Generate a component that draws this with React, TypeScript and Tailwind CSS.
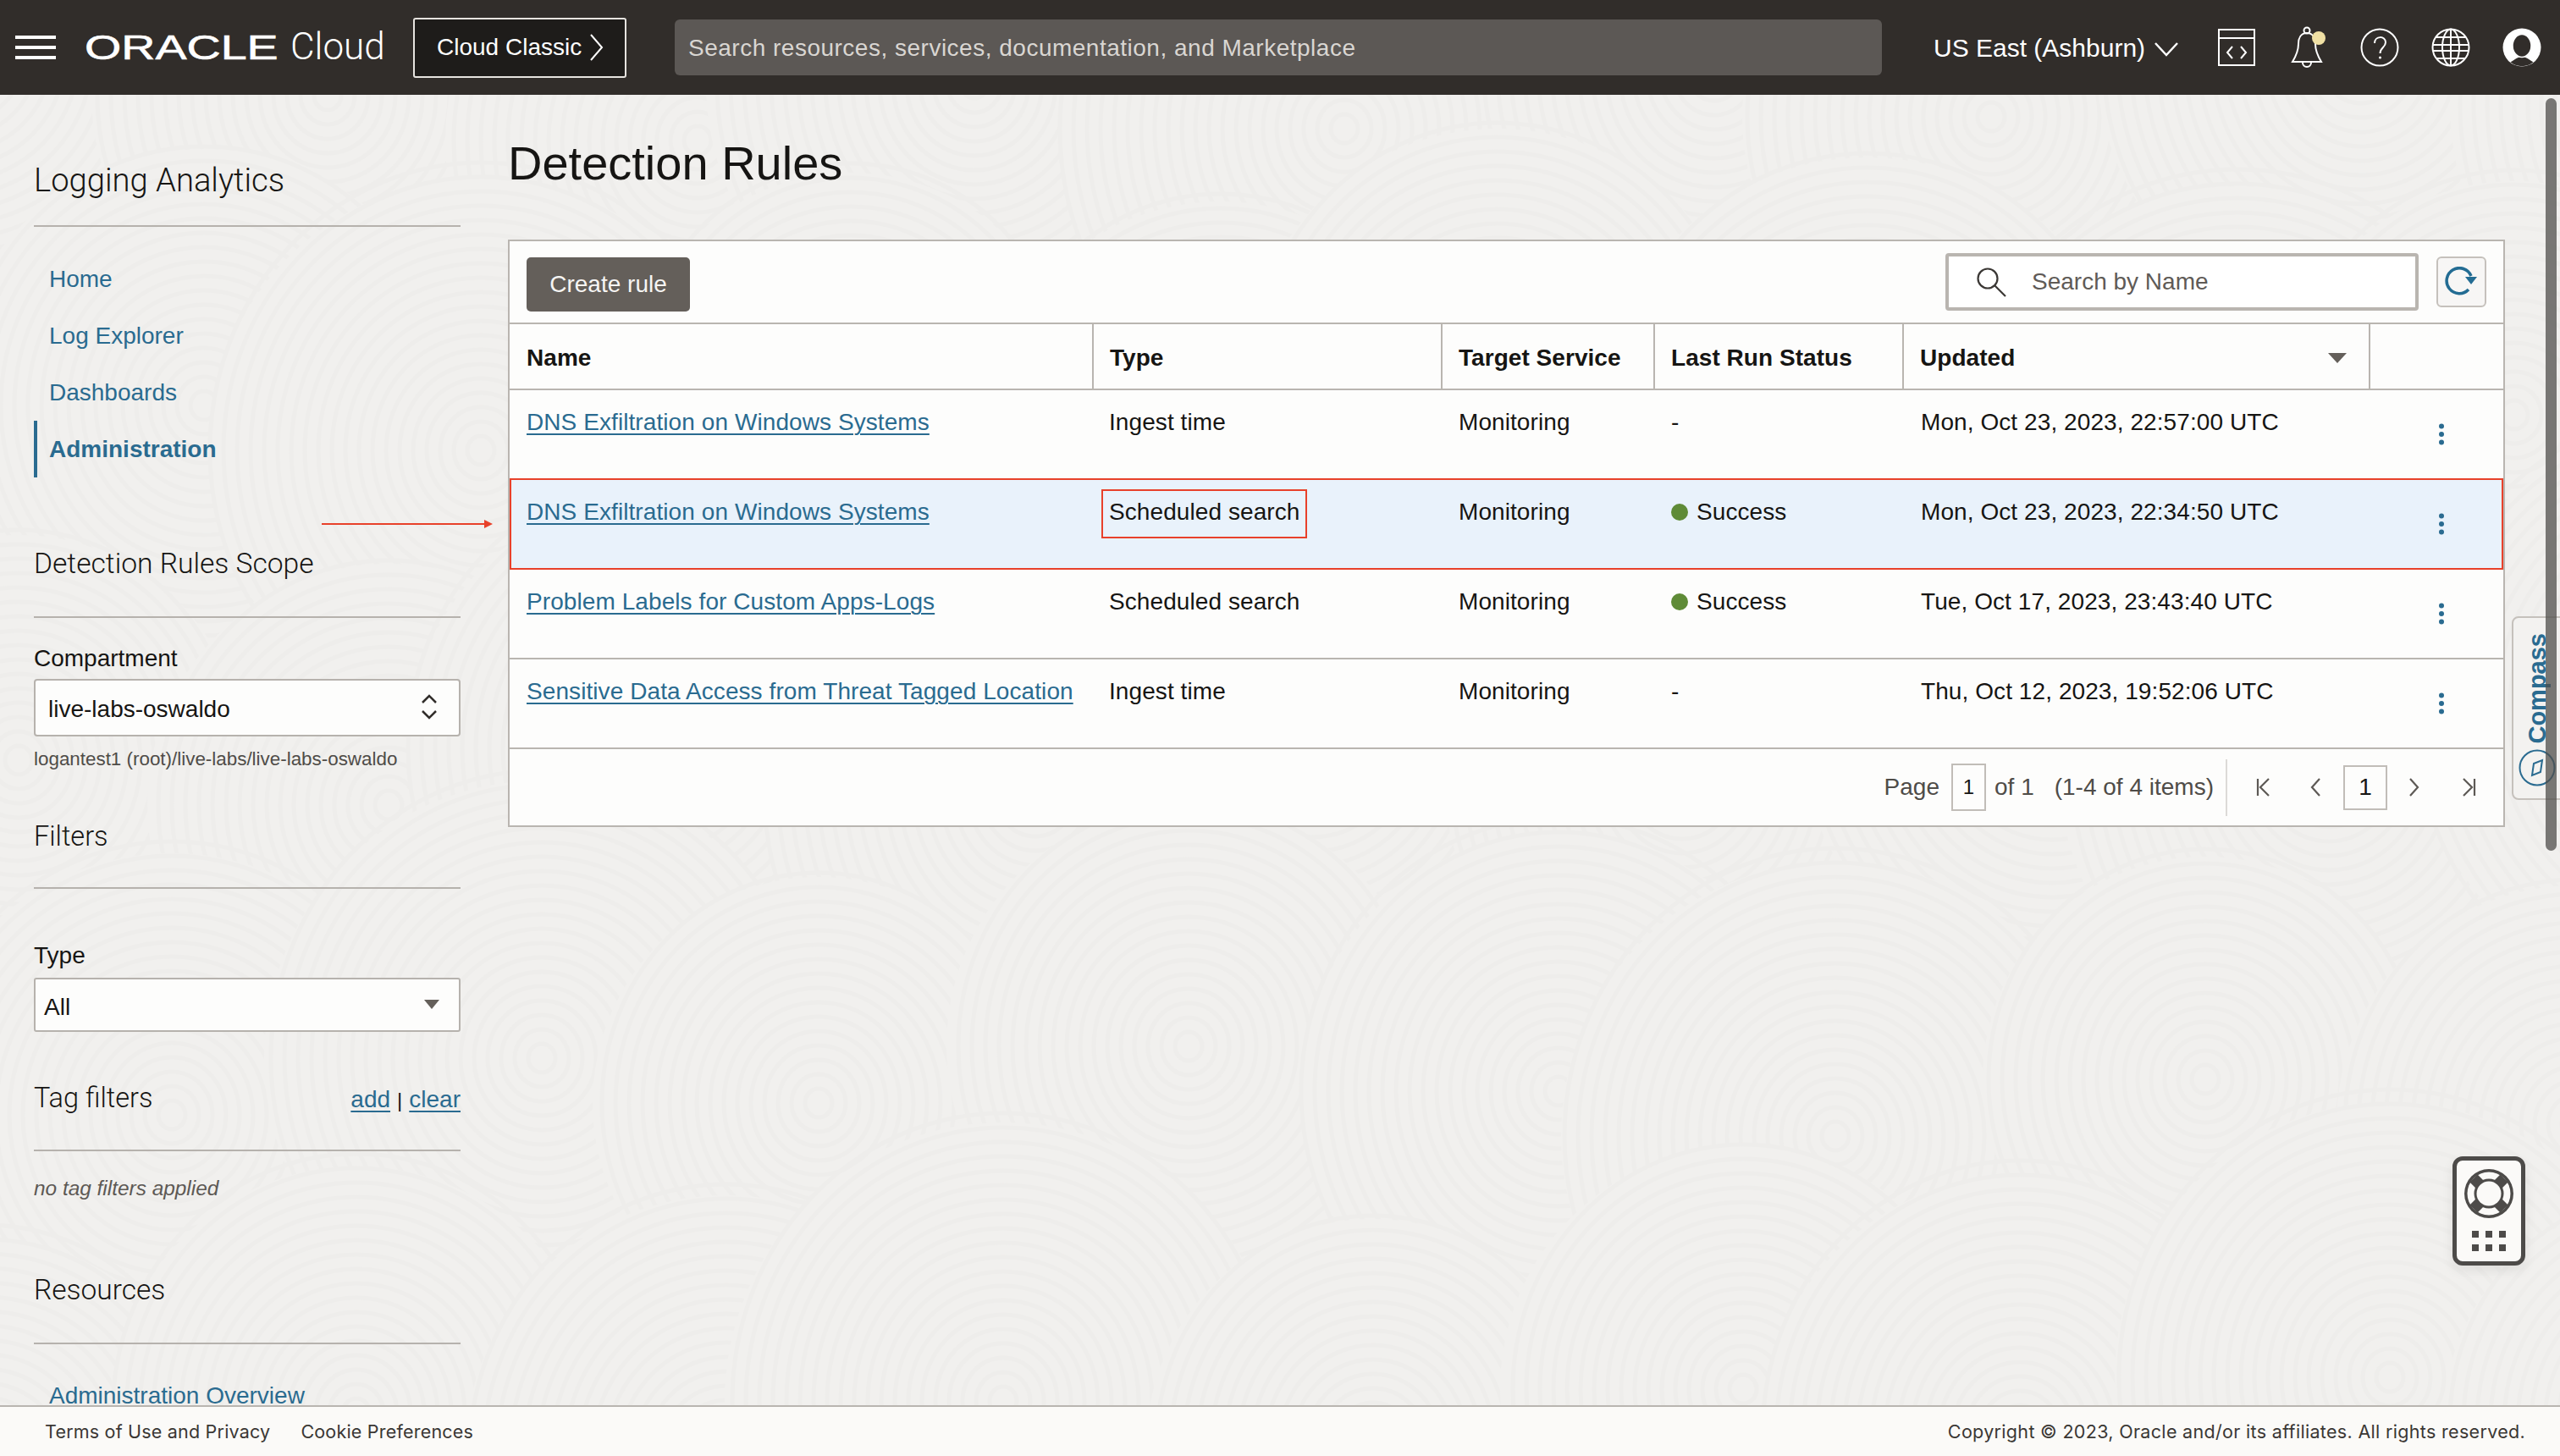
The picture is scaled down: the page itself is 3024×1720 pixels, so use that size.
import React from "react";

const SANS = "font-['Liberation_Sans',Arial,sans-serif]";
const LINK = "text-[#2a6b90]";

function Swirls() {
  const centers: [number, number, number][] = [];
  const cols = 9;
  const rows = 5;
  for (let r = 0; r < rows; r++) {
    for (let c = 0; c < cols; c++) {
      const x = c * 400 + (r % 2) * 200 + ((c * 37 + r * 91) % 110) - 50;
      const y = 120 + r * 390 + ((c * 53 + r * 29) % 120) - 60;
      centers.push([x, y, 260 + ((c * 19 + r * 43) % 80)]);
    }
  }
  return (
    <svg className="absolute inset-0 h-full w-full" viewBox="0 0 3024 1720" fill="none" aria-hidden="true">
      {centers.map(([x, y, R], i) => (
        <g key={i}>
          <circle cx={x} cy={y} r={R} fill="#f1f0ee" />
          {Array.from({ length: Math.floor(R / 16) }).map((_, k) => (
            <ellipse key={k} cx={x} cy={y} rx={(k + 1) * 16} ry={(k + 1) * 17} stroke="#eeedeb" strokeWidth="5" />
          ))}
        </g>
      ))}
    </svg>
  );
}

function Section({ title, outer, size, right }: { title: string; outer: string; size: string; right?: React.ReactNode }) {
  return (
    <div className={`flex items-center justify-between border-b-2 border-[#b6b2ad] ${outer}`}>
      <span className={`-mb-[2px] font-['Roboto',sans-serif] font-light leading-none text-[#161513] ${size}`}>{title}</span>
      {right}
    </div>
  );
}

function NavItem({ label, active }: { label: string; active?: boolean }) {
  return (
    <div className={`flex h-[67px] items-center text-[28px] ${LINK} ${active ? "border-l-4 border-[#2a6b90] pl-[14px] font-bold" : "pl-[18px]"}`}>
      {label}
    </div>
  );
}

function Kebab() {
  return (
    <svg width="8" height="26" viewBox="0 0 8 26" className="text-[#2a6b90]" fill="currentColor" aria-hidden="true">
      <circle cx="4" cy="3.5" r="3" />
      <circle cx="4" cy="13" r="3" />
      <circle cx="4" cy="22.5" r="3" />
    </svg>
  );
}

type Row = { name: string; type: string; status: string; updated: string };
const rows: Row[] = [
  { name: "DNS Exfiltration on Windows Systems", type: "Ingest time", status: "-", updated: "Mon, Oct 23, 2023, 22:57:00 UTC" },
  { name: "DNS Exfiltration on Windows Systems", type: "Scheduled search", status: "Success", updated: "Mon, Oct 23, 2023, 22:34:50 UTC" },
  { name: "Problem Labels for Custom Apps-Logs", type: "Scheduled search", status: "Success", updated: "Tue, Oct 17, 2023, 23:43:40 UTC" },
  { name: "Sensitive Data Access from Threat Tagged Location", type: "Ingest time", status: "-", updated: "Thu, Oct 12, 2023, 19:52:06 UTC" },
];

const GRID = "grid grid-cols-[690px_412px_251px_294px_551px_1fr]";

function TableRow({ row, highlight }: { row: Row; highlight: boolean }) {
  const cell = "pt-[20px] leading-[36px]";
  return (
    <div
      className={`${GRID} relative text-[28px] tracking-[0.08px] text-[#161513] ${
        highlight
          ? "-mt-[2px] h-[108px] bg-[#e9f2fb] shadow-[inset_0_0_0_2px_#e8412a]"
          : "h-[106px] border-b-2 border-[#b9b5b0]"
      }`}
    >
      <div className={`${cell} pl-[20px] ${highlight ? "pt-[22px]" : ""}`}>
        <span className={`underline underline-offset-[4px] decoration-2 ${LINK}`}>{row.name}</span>
      </div>
      <div className={`${cell} pl-[18px] ${highlight ? "pt-[22px]" : ""}`}>
        {highlight ? (
          <span className="relative inline-block">
            {row.type}
            <span className="absolute -left-[9px] -right-[9px] -top-[9px] -bottom-[13px] border-2 border-[#e8412a]" />
          </span>
        ) : (
          row.type
        )}
      </div>
      <div className={`${cell} pl-[19px] ${highlight ? "pt-[22px]" : ""}`}>Monitoring</div>
      <div className={`${cell} flex items-start gap-[10px] pl-[19px] ${highlight ? "pt-[22px]" : ""}`}>
        {row.status === "Success" && <span className="mt-[8px] h-[20px] w-[20px] rounded-full bg-[#5f8b37]" />}
        <span>{row.status}</span>
      </div>
      <div className={`${cell} pl-[20px] ${highlight ? "pt-[22px]" : ""}`}>{row.updated}</div>
      <div className={`flex items-start pl-[80px] ${highlight ? "pt-[41px]" : "pt-[39px]"}`}>
        <Kebab />
      </div>
    </div>
  );
}

function HeaderIcons() {
  return (
    <div className="ml-[45px] flex items-center gap-[40px] text-white">
      <svg width="46" height="46" viewBox="0 0 46 46" fill="none" stroke="currentColor" strokeWidth="2" aria-hidden="true">
        <rect x="2" y="2" width="42" height="42" />
        <path d="M2 12h42" />
        <path d="M18 22l-6 7 6 7M28 22l6 7-6 7" />
      </svg>
      <svg width="48" height="50" viewBox="0 0 48 50" fill="none" stroke="currentColor" strokeWidth="2" aria-hidden="true" className="-ml-[1px]">
        <circle cx="21" cy="5" r="3.5" />
        <path d="M21 8c-7 0-10 6-10 13 0 9-4 16-7 21h34c-3-5-7-12-7-21 0-7-3-13-10-13z" />
        <path d="M16 43a5 5 0 0 0 10 0" />
        <ellipse cx="35" cy="14" rx="8" ry="8" fill="#f0e0a4" stroke="none" />
      </svg>
      <svg width="46" height="46" viewBox="0 0 46 46" fill="none" stroke="currentColor" strokeWidth="2" aria-hidden="true" className="-ml-[4px]">
        <circle cx="23" cy="23" r="21.5" />
        <path d="M17 18c0-9 13-9 13-1 0 6-6.500 6-6.500 13" />
        <circle cx="23.500" cy="35" r="1.500" fill="currentColor" stroke="none" />
      </svg>
      <svg width="46" height="46" viewBox="0 0 46 46" fill="none" stroke="currentColor" strokeWidth="2" aria-hidden="true" className="-ml-[2px]">
        <circle cx="23" cy="23" r="21.5" />
        <ellipse cx="23" cy="23" rx="10" ry="21.500" />
        <path d="M23 2v42M5 11h36M2 20h42M2 27h42M6 36h34" />
      </svg>
      <svg width="46" height="46" viewBox="0 0 46 46" aria-hidden="true" className="-ml-[2px]">
        <circle cx="23" cy="23" r="22.500" fill="#fff" />
        <path d="M9.500 40.500Q15 36 23 33Q31 36 36.500 40.500A22 22 0 0 1 9.500 40.500z" fill="#312d2a" />
        <ellipse cx="23" cy="21" rx="11" ry="13.500" fill="#312d2a" stroke="#fff" strokeWidth="1.500" />
      </svg>
    </div>
  );
}

function LifeBuoy() {
  return (
    <svg width="60" height="60" viewBox="0 0 60 60" aria-hidden="true">
      <circle cx="30" cy="30" r="29" fill="#4d4b49" />
      <circle cx="30" cy="30" r="25.500" fill="#fbfaf8" />
      <path d="M12 12l36 36M48 12L12 48" stroke="#4d4b49" strokeWidth="13" />
      <circle cx="30" cy="30" r="17.500" fill="#4d4b49" />
      <circle cx="30" cy="30" r="14.500" fill="#fbfaf8" />
    </svg>
  );
}

function PageIcon({ d, className }: { d: string; className?: string }) {
  return (
    <svg width="20" height="24" viewBox="0 0 20 24" fill="none" stroke="#5d5955" strokeWidth="2.200" className={className} aria-hidden="true">
      <path d={d} />
    </svg>
  );
}

export default function App() {
  return (
    <div className={`relative flex h-[1720px] w-[3024px] flex-col overflow-hidden bg-[#f1f0ee] ${SANS}`}>
      <Swirls />

      {/* top bar */}
      <header className="relative flex h-[112px] flex-none items-center bg-[#312d2a] text-white">
        <div className="ml-[18px] flex h-[28px] w-[48px] flex-col justify-between">
          <span className="h-[4px] bg-white" />
          <span className="h-[4px] bg-white" />
          <span className="h-[4px] bg-white" />
        </div>
        <div className="ml-[34px] w-[243px] text-[40px] leading-none [-webkit-text-stroke:0.6px_white]">
          <span className="inline-block origin-left scale-x-[1.39]">ORACLE</span>
        </div>
        <span className="mb-[2px] w-[145px] font-['Roboto',sans-serif] text-[44px] font-light leading-none">Cloud</span>
        <div className="flex h-[71px] w-[252px] items-center rounded-[3px] border-2 border-[#e6e3df] bg-[#1e1c1a] pl-[26px] text-[28px]">
          Cloud Classic
          <svg width="18" height="34" viewBox="0 0 18 34" fill="none" stroke="currentColor" strokeWidth="2" className="ml-[9px]" aria-hidden="true">
            <path d="M2 2l13 15L2 32" />
          </svg>
        </div>
        <div className="ml-[57px] flex h-[66px] w-[1426px] items-center rounded-[6px] bg-[#5c5855] pl-[16px] pt-[2px] text-[28px] tracking-[0.5px] text-[#d9d6d2]">
          Search resources, services, documentation, and Marketplace
        </div>
        <span className="ml-[61px] text-[30px]">US East (Ashburn)</span>
        <svg width="30" height="20" viewBox="0 0 30 20" fill="none" stroke="currentColor" strokeWidth="2.500" className="ml-[10px] mt-[4px]" aria-hidden="true">
          <path d="M2 3l13 14L28 3" />
        </svg>
        <HeaderIcons />
      </header>

      {/* body */}
      <main className="relative flex min-h-0 flex-1 overflow-hidden">
        <aside className="w-[544px] flex-none pl-[40px] text-[#161513]">
          <Section title="Logging Analytics" size="text-[38.2px]" outer="mt-[46px] h-[110px]" />
          <nav className="mt-[28px]">
            <NavItem label="Home" />
            <NavItem label="Log Explorer" />
            <NavItem label="Dashboards" />
            <NavItem label="Administration" active />
          </nav>
          <Section title="Detection Rules Scope" size="text-[33.6px]" outer="mt-[38px] h-[128px]" />
          <div className="mt-[27px] h-[40px] pt-[1px] text-[28px] leading-[40px]">Compartment</div>
          <div className="mt-[5px] flex h-[68px] items-center justify-between rounded-[4px] border-2 border-[#b6b2ad] bg-[#fdfdfc] pl-[15px] pr-[25px] pt-[3px] text-[28px]">
            <span>live-labs-oswaldo</span>
            <svg width="20" height="32" viewBox="0 0 20 32" fill="none" stroke="#312d2a" strokeWidth="2.500" className="-mt-[5px]" aria-hidden="true">
              <path d="M2 11l8-8 8 8M2 21l8 8 8-8" />
            </svg>
          </div>
          <div className="mt-[11px] h-[30px] pt-[1px] text-[22.4px] leading-[30px] text-[#4f4c48]">logantest1 (root)/live-labs/live-labs-oswaldo</div>
          <Section title="Filters" size="text-[32.5px]" outer="mt-[15px] h-[124px]" />
          <div className="mt-[58px] h-[40px] pt-[1px] text-[28px] leading-[40px]">Type</div>
          <div className="mt-[7px] flex h-[64px] items-center justify-between rounded-[3px] border-2 border-[#b6b2ad] bg-[#fdfdfc] pl-[10px] pr-[23px] pt-[5px] text-[28px]">
            <span>All</span>
            <span className="-mt-[6px] h-0 w-0 border-x-[9px] border-t-[11px] border-x-transparent border-t-[#645f5a]" />
          </div>
          <Section
            title="Tag filters"
            size="text-[32.5px]"
            outer="mt-[15px] h-[126px]"
            right={
              <span className="mt-[6px] text-[28px] leading-none">
                <span className={`underline underline-offset-[4px] ${LINK}`}>add</span>
                <span className="mx-[8px] text-[24px]">|</span>
                <span className={`underline underline-offset-[4px] ${LINK}`}>clear</span>
              </span>
            }
          />
          <div className="mt-[29px] h-[30px] text-[24.4px] italic leading-[30px] text-[#5d5955]">no tag filters applied</div>
          <Section title="Resources" size="text-[33.5px]" outer="mt-[41px] h-[128px]" />
          <nav className="mt-[27px]">
            <NavItem label="Administration Overview" />
          </nav>
        </aside>

        <section className="w-[2359px] flex-none pl-[56px] pr-0">
          <h1 className="mt-[40px] flex h-[82px] items-center text-[56px] font-normal leading-none text-[#161513]">Detection Rules</h1>
          <div className="mt-[49px] w-[2359px] border-2 border-[#b9b5b0] bg-[#fdfdfc]">
            {/* toolbar */}
            <div className="flex h-[98px] items-center border-b-2 border-[#b9b5b0] pl-[20px] pr-[20px]">
              <div className="mt-[6px] flex h-[64px] w-[193px] items-center justify-center rounded-[5px] bg-[#645f5a] text-[28px] text-[#f6f5f3]">Create rule</div>
              <div className="ml-auto flex h-[68px] w-[559px] items-center rounded-[4px] border-4 border-[#b9b5b0] bg-white pl-[32px] text-[28px] text-[#5f5b57]">
                <svg width="38" height="36" viewBox="0 0 38 36" fill="none" stroke="#3b3835" strokeWidth="2.200" aria-hidden="true">
                  <circle cx="14" cy="14" r="11.500" />
                  <path d="M22 22l13 13" />
                </svg>
                <span className="ml-[28px]">Search by Name</span>
              </div>
              <div className="ml-[21px] flex h-[60px] w-[59px] items-center justify-center rounded-[6px] border-2 border-[#c5c1bc] bg-[#f7f6f5]">
                <svg width="42" height="36" viewBox="0 0 42 36" fill="none" aria-hidden="true">
                  <path d="M29 27A15 15 0 1 1 32 11" stroke="#236c93" strokeWidth="3.500" />
                  <path d="M25 12h14l-7 9z" fill="#236c93" />
                </svg>
              </div>
            </div>
            {/* header */}
            <div className={`${GRID} h-[78px] border-b-2 border-[#b9b5b0] pt-[4px] text-[28px] font-bold tracking-[0.05px] text-[#161513]`}>
              {["Name", "Type", "Target Service", "Last Run Status"].map((h, i) => (
                <div key={h} className={`-mt-[4px] flex items-center border-r-2 border-[#b9b5b0] pt-[4px] ${i === 0 ? "pl-[20px]" : "pl-[19px]"}`}>{h}</div>
              ))}
              <div className="-mt-[4px] flex items-center justify-between border-r-2 border-[#b9b5b0] pl-[19px] pr-[26px] pt-[4px]">
                Updated
                <span className="h-0 w-0 border-x-[11px] border-t-[12px] border-x-transparent border-t-[#645f5a]" />
              </div>
              <div />
            </div>
            {rows.map((r, i) => (
              <TableRow key={i} row={r} highlight={i === 1} />
            ))}
            {/* pagination */}
            <div className="flex h-[90px] items-center justify-end text-[28px] text-[#4f4c48]">
              <span>Page</span>
              <span className="ml-[14px] flex h-[56px] w-[41px] items-center justify-center border-2 border-[#c1bdb8] text-[24px] text-[#161513]">1</span>
              <span className="ml-[10px]">of 1</span>
              <span className="ml-[24px]">(1-4 of 4 items)</span>
              <span className="ml-[14px] h-[67px] w-[2px] bg-[#dcdad7]" />
              <PageIcon className="ml-[33px]" d="M3 2v20M16 2L6 12l10 10" />
              <PageIcon className="ml-[42px]" d="M14 2L5 12l9 10" />
              <span className="ml-[22px] flex h-[53px] w-[52px] items-center justify-center border-2 border-[#c1bdb8] text-[28px] text-[#161513]">1</span>
              <PageIcon className="ml-[21px]" d="M6 2l9 10-9 10" />
              <PageIcon className="ml-[45px]" d="M17 2v20M4 2l10 10L4 22" />
              <span className="w-[31px]" />
            </div>
          </div>
        </section>
      </main>

      {/* footer */}
      <footer className="relative flex h-[60px] flex-none items-center border-t-2 border-[#b9b5b0] bg-[#fbfaf8] pl-[53px] pr-[41px] font-['Inter',sans-serif] text-[21.5px] tracking-[0.2px] text-[#3a3734]">
        <span>Terms of Use and Privacy</span>
        <span className="ml-[36px]">Cookie Preferences</span>
        <span className="ml-auto tracking-[0.32px]">Copyright © 2023, Oracle and/or its affiliates. All rights reserved.</span>
      </footer>

      {/* annotation arrow */}
      <svg width="204" height="14" viewBox="0 0 204 14" className="absolute left-[380px] top-[612px]" aria-hidden="true">
        <path d="M0 7h192" stroke="#e8412a" strokeWidth="2" />
        <path d="M192 2l10 5-10 5z" fill="#e8412a" />
      </svg>

      {/* compass tab */}
      <div className="absolute left-[2967px] top-[728px] flex h-[217px] w-[70px] flex-col items-center justify-end rounded-l-[8px] border-2 border-[#c5c1bc] bg-[#f3f2f0] pb-[14px] pr-[10px]">
        <span className="rotate-180 text-[29px] font-bold leading-none text-[#2a6b90] [writing-mode:vertical-rl]">Compass</span>
        <svg width="44" height="44" viewBox="0 0 44 44" fill="none" stroke="#2a6b90" strokeWidth="2" className="mt-[6px] flex-none" aria-hidden="true">
          <circle cx="22" cy="22" r="20.500" />
          <path d="M28 13l-2 14-10 4 2-14z" />
        </svg>
      </div>

      {/* scrollbar */}
      <div className="absolute left-[3007px] top-[116px] h-[889px] w-[13px] rounded-full bg-[#4f4d4b]/75" />

      {/* help widget */}
      <div className="absolute left-[2897px] top-[1366px] flex h-[129px] w-[86px] flex-col items-center rounded-[12px] border-[5px] border-[#4d4b49] bg-[#fbfaf8] pt-[9px] shadow-[0_6px_14px_rgba(0,0,0,0.08)]">
        <LifeBuoy />
        <div className="mt-[14px] grid grid-cols-3 gap-x-[8px] gap-y-[8px]">
          {Array.from({ length: 6 }).map((_, i) => (
            <span key={i} className="h-[8px] w-[8px] bg-[#4d4b49]" />
          ))}
        </div>
      </div>
    </div>
  );
}
